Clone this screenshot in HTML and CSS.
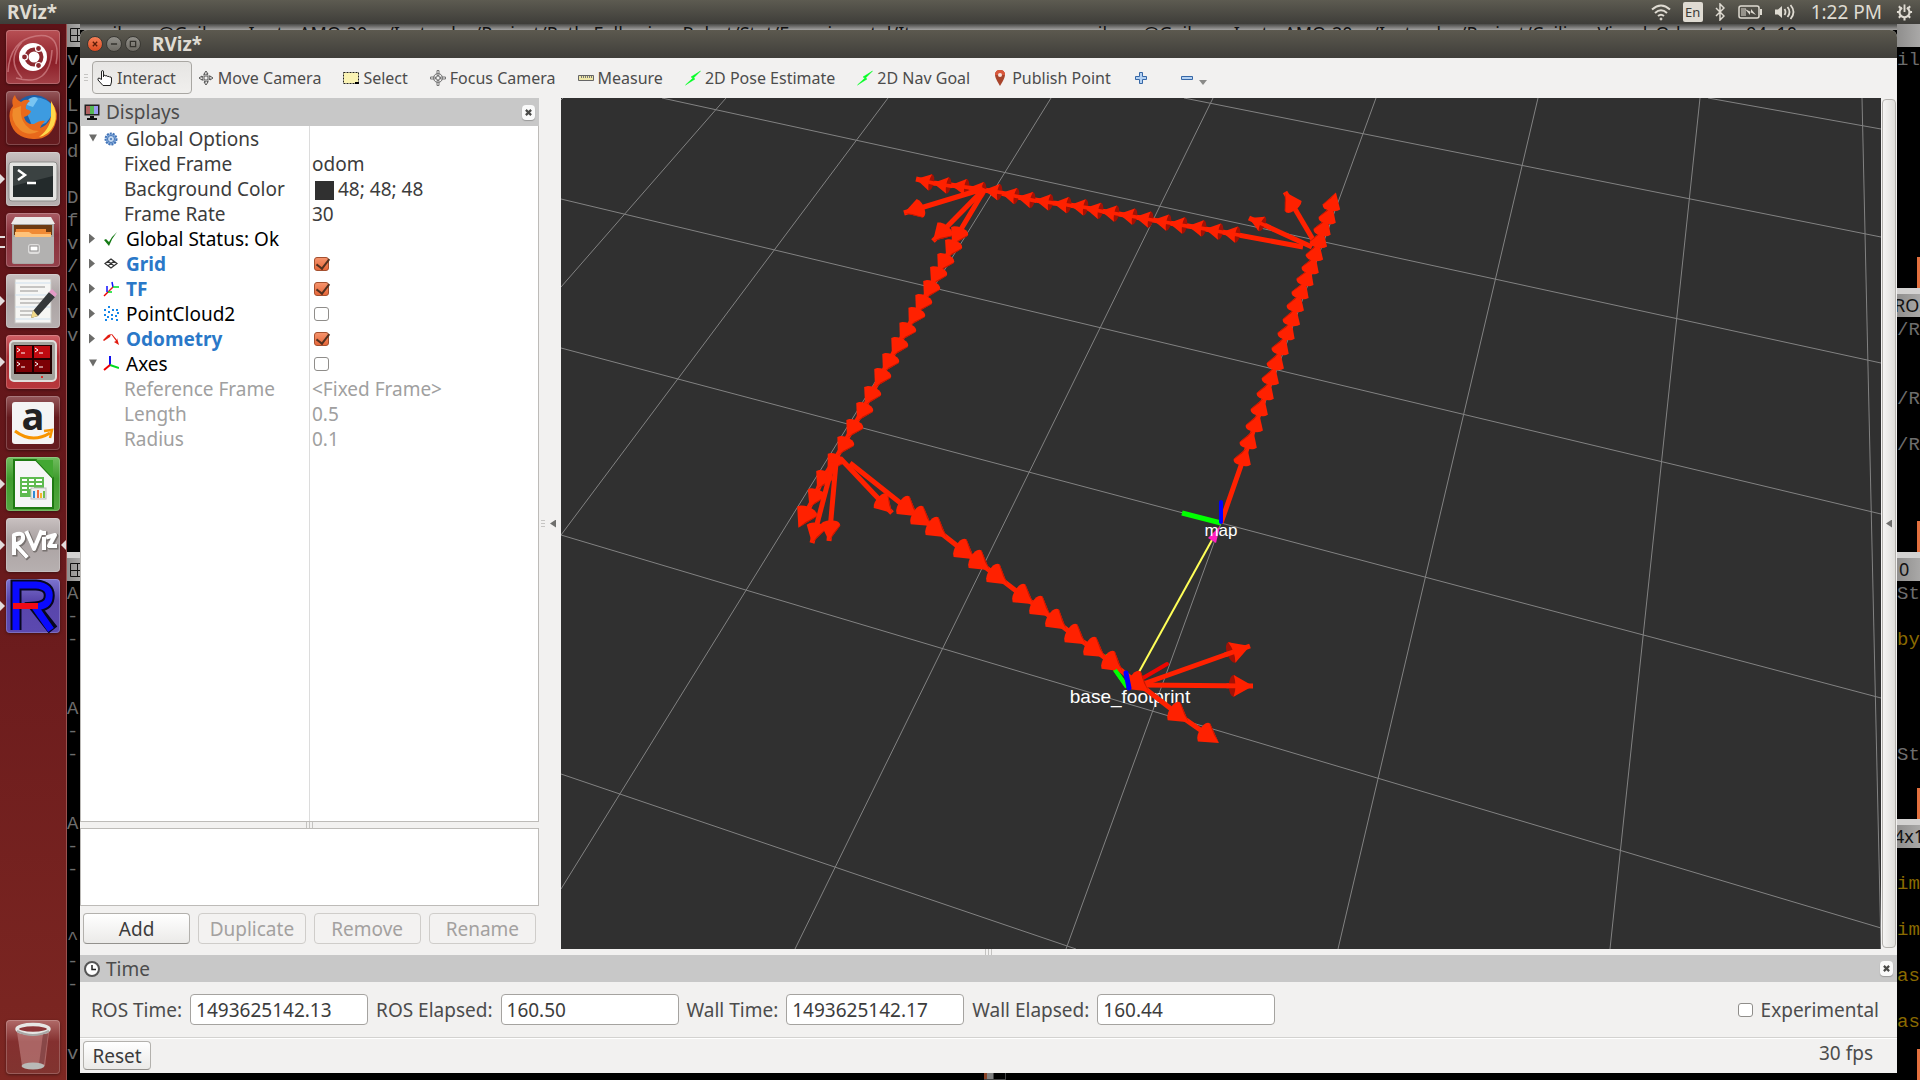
FILE: index.html
```html
<!DOCTYPE html>
<html lang="en">
<head>
<meta charset="utf-8">
<title>RViz*</title>
<link rel="stylesheet" href="styles.css">
</head>
<body>
<header class="panel">
  <span class="panel-title">RViz*</span>
  <div class="indicators">
    <svg width="20" height="18" viewBox="0 0 20 18" fill="none" stroke="#dfdbd2" stroke-width="2"><path d="M1 6.500Q10-1.500 19 6.500M4 10Q10 4.500 16 10M7 13Q10 10.500 13 13"/><circle cx="10" cy="16" r="1" fill="#dfdbd2" stroke-width="1"/></svg>
    <span class="lang">En</span>
    <svg width="10" height="18" viewBox="0 0 10 18" fill="none" stroke="#dfdbd2" stroke-width="1.500"><path d="M1 5l8 8-4 4V1l4 4-8 8"/></svg>
    <svg class="battery" width="24" height="14" viewBox="0 0 24 14"><rect x="1" y="1" width="20" height="12" rx="2" fill="none" stroke="#dfdbd2" stroke-width="1.500"/><path d="M22 4h2v6h-2z" fill="#dfdbd2"/><path d="M3 3h5v8H3z" fill="#96938b"/><path d="M7 4l6 3V4l5 6-6-3v3z" fill="#dfdbd2"/></svg>
    <svg class="volume" width="21" height="18" viewBox="0 0 21 18" fill="none" stroke="#dfdbd2" stroke-width="1.800"><path d="M1 6.500h3L8 3v12L4 11.500H1z" fill="#dfdbd2" stroke="none"/><path d="M10.500 6q2 3 0 6M13.500 4q4 5 0 10M16.500 2q6 7 0 14"/></svg>
    <span class="clock">1:22 PM</span>
    <svg width="17" height="18" viewBox="0 0 18 18" fill="none" stroke="#dfdbd2"><path d="M6.500 4.500a5.300 5.300 0 1 0 5 0" stroke-width="2.200"/><path d="M9 1v8" stroke-width="2"/><path d="M1 9h3M14 9h3M3 3l2 2M15 3l-2 2M3 15l2-2M15 15l-2-2M9 15v3" stroke-width="2.200"/></svg>
  </div>
</header>

<div class="desktop">
<nav class="launcher" aria-label="Launcher">
  <a href="#dash" class="tile dash" aria-label="Dash"><svg viewBox="0 0 54 54"><path d="M2 42Q4 10 30 6T50 34M10 48Q44 58 46 20M16 12Q0 30 16 48" fill="none" stroke="#d3888b" stroke-width="1.500" opacity=".7"/><circle cx="27" cy="27" r="14" fill="#fff"/><circle cx="28" cy="27" r="7.500" fill="none" stroke="#8c2a30" stroke-width="4"/><g fill="#8c2a30" stroke="#fff" stroke-width="1.200"><circle cx="18.500" cy="27" r="3"/><circle cx="32.500" cy="18.500" r="3"/><circle cx="32.500" cy="35.500" r="3"/></g></svg></a>
  <a href="#firefox" class="tile glass" aria-label="Firefox"><svg viewBox="0 0 54 54"><circle cx="28" cy="25" r="21" fill="#1c5fa8"/><path d="M17 13Q26 2 40 9T40 32L27 37Z" fill="#3d9be0"/><path d="M23 8q6-4 9 0l-5 8-6-2z" fill="#79c5f2"/><path d="M7 15Q5 8 9 4Q10 9 15 11Q20 7 24 10Q19 13 20 18L25 20Q24 24 18 26Q20 34 28 33Q34 29 39 30Q35 34 34 37Q48 32 46 12Q54 22 49 34Q43 49 27 48Q8 47 4 30Q2 20 7 15Z" fill="#e8691b"/><path d="M45 10Q53 22 48 34Q43 44 33 46Q46 36 45 22Z" fill="#ffd84a"/><path d="M7 18Q4 30 14 39Q23 46 33 40Q22 40 17 30Q14 24 15 15Z" fill="#f08c2c"/></svg></a>
  <a href="#terminal" class="tile silver running" aria-label="Terminal"><svg viewBox="0 0 54 54"><rect x="3" y="10" width="48" height="39" rx="3" fill="#e4e4e2" stroke="#8d8d8b"/><rect x="7" y="14" width="40" height="31" fill="#232a2b"/><path d="M7 14h40v10L7 34z" fill="#3b4242"/><path d="M12 18l7 5-7 5M21 31h9" fill="none" stroke="#fff" stroke-width="2.500"/></svg></a>
  <a href="#files" class="tile rose double" aria-label="Files"><svg viewBox="0 0 54 54"><path d="M9 4h36l4 7H5z" fill="#ecebea"/><path d="M6 11h42v38q0 2-2 2H8q-2 0-2-2z" fill="#a8a7a5"/><path d="M8 12h38v10H8z" fill="#6d3a12"/><path d="M10 16h30v3h5v5H9z" fill="#f08a35"/><path d="M9 19h14l3 2h19v4H9z" fill="#ffc37a"/><path d="M7 24h41v24q0 2-2 2H9q-2 0-2-2z" fill="#b2b1b0"/><rect x="22" y="31" width="12" height="10" rx="3" fill="#dedddc"/><rect x="24" y="33" width="8" height="5" fill="#fff" stroke="#8b8a89"/></svg></a>
  <a href="#editor" class="tile silver running" aria-label="Text Editor"><svg viewBox="0 0 54 54"><rect x="9" y="5" width="36" height="44" fill="#f6f6f4" stroke="#c5c3c0"/><path d="M9 9h36M9 21h36M9 33h36M9 45h36" stroke="#cfe0ee"/><path d="M14 13h25M14 17h18M14 25h25M14 29h25M14 37h14M14 41h12" stroke="#b7b5b3" stroke-width="1.500"/><path d="M27 37L43 18l6 5-17 19-7 2z" fill="#35383a"/><path d="M43 18l3-3 5 5-2 3z" fill="#e49ac6"/><path d="M27 36l5 6-7 2z" fill="#f1d98a"/></svg></a>
  <a href="#terminator" class="tile red running" aria-label="Terminator"><svg viewBox="0 0 54 54"><rect x="4" y="6" width="46" height="40" rx="4" fill="#a3a29c" stroke="#e0dfdb" stroke-width="2"/><rect x="8" y="10" width="38" height="29" fill="#200"/><path d="M10 11h16v12H10zM28 11h16v12H28z" fill="#c00a10"/><path d="M10 25h16v12H10zM28 25h16v12H28z" fill="#7c0005"/><path d="M11 13l3 2-3 2M15 18h4M29 13l3 2-3 2M33 18h4M11 27l3 2-3 2M15 32h4M29 27l3 2-3 2M33 32h4" fill="none" stroke="#fff"/><circle cx="36" cy="42" r="1" fill="#e00"/></svg></a>
  <a href="#amazon" class="tile glass" aria-label="Amazon"><svg viewBox="0 0 54 54"><rect x="6" y="6" width="42" height="42" rx="3" fill="#f4f4f4"/><text x="27" y="34" text-anchor="middle" class="amazon-a">a</text><path d="M9 35Q26 48 44 37" fill="none" stroke="#f79400" stroke-width="3"/><path d="M38 35l8-1-2 8" fill="none" stroke="#f79400" stroke-width="2.500"/></svg></a>
  <a href="#calc" class="tile green running" aria-label="LibreOffice Calc"><svg viewBox="0 0 54 54"><path d="M8 3h22l17 18v30H8z" fill="#f6f6f6" stroke="#1f7a12" stroke-width="2"/><path d="M30 3h17v18z" fill="#43a832"/><path d="M14 20h24v20H14z" fill="#5fbb50"/><path d="M16 22h5v2h-5zM23 22h5v2h-5zM30 22h6v2h-6zM16 26h5v2h-5zM23 26h5v2h-5zM30 26h6v2h-6zM16 30h5v2h-5zM23 30h5v2h-5zM16 34h5v2h-5z" fill="#fff"/><rect x="25" y="31" width="15" height="11" fill="#eee" stroke="#bbb"/><path d="M27 34h2v7h-2z" fill="#2f8bd6"/><path d="M31 33h2v8h-2z" fill="#f06a3c"/><path d="M34 36h2v5h-2z" fill="#f5b52b"/><path d="M37 34h2v7h-2z" fill="#6fbf4b"/></svg></a>
  <a href="#rviz" class="tile silver running focused" aria-label="RViz"><svg viewBox="0 0 54 54"><g fill="none" stroke-linecap="square" stroke-linejoin="round"><path d="M9 36V18Q19 14 18 22 16 27 10 27L21 39M22 16L29 32 36 15M39 22V31M39 16V16M43 20L50 18 44 29 50 29" stroke="#77716f" stroke-width="5"/><path d="M8 35V17Q18 13 17 21 15 26 9 26L20 38M21 15L28 31 35 14M38 21V30M38 15V15M42 19L49 17 43 28 49 28" stroke="#fff" stroke-width="4"/></g></svg></a>
  <a href="#rxplot" class="tile violet running" aria-label="R"><svg viewBox="0 0 54 54"><path d="M10 51V6H30Q45 7 43 19 42 27 29 28L47 51" fill="none" stroke="#070720" stroke-width="11"/><path d="M10 51V6H30Q45 7 43 19 42 27 29 28L45 51" fill="none" stroke="#0a0aff" stroke-width="7"/><path d="M7 24h25v6H7z" fill="#f20b16"/></svg></a>
  <a href="#trash" class="tile trash" aria-label="Trash"><svg viewBox="0 0 54 54"><path d="M11 12h32l-4 34H16z" fill="#d9a5a5" opacity=".45"/><path d="M37 14h5l-4 30h-5z" fill="#4a1013" opacity=".35"/><ellipse cx="27" cy="46" rx="11.500" ry="3.500" fill="#b9bbb8"/><ellipse cx="27" cy="9" rx="16" ry="4.500" fill="#8b3537" stroke="#e6e6e4" stroke-width="3.500"/><path d="M11 11Q27 19 43 11" fill="none" stroke="#a8a8a6" stroke-width="2"/></svg></a>
</nav>

<main class="workspace">
  <div class="term-title"><span>silvam@Gailvam-Inote-AMO-20: ~/Instrudes/Project/Path_Following_Robot/Stat/Experimental/Its</span><span>silvam@Gailvam-Inote-AMO-20: ~/Instrudes/Project/Ceiling_Visual_Odometry 94x10</span></div>

  <div class="strip strip-left">
    <div class="bar bar-first"><svg width="14" height="14" viewBox="0 0 14 14" fill="none" stroke="#111"><path d="M.5.5h13v13H.5zM7.500 0v14M0 7.500h14"/></svg></div>
<pre class="upper">v
/
L
D
d

D
f
v
/
^
v
v</pre>
    <div class="bar"><svg width="14" height="14" viewBox="0 0 14 14" fill="none" stroke="#111"><path d="M.5.5h13v13H.5zM7.500 0v14M0 7.500h14"/></svg></div>
<pre>A
-
-


A
-
-


A
-
-


^
-
-


v</pre>
  </div>

  <section class="window" aria-label="RViz">
    <div class="titlebar">
      <button class="wm close" aria-label="Close"><svg viewBox="0 0 16 16"><path d="M5.500 5.500l5 5m0-5l-5 5" stroke="#5a1c08" stroke-width="1.500"/></svg></button>
      <button class="wm" aria-label="Minimize"><svg viewBox="0 0 16 16"><path d="M4.500 8h7" stroke="#35332e" stroke-width="1.500"/></svg></button>
      <button class="wm" aria-label="Maximize"><svg viewBox="0 0 16 16"><path d="M5 5h6v6H5z" fill="none" stroke="#35332e" stroke-width="1.500"/></svg></button>
      <h1>RViz*</h1>
    </div>

    <div class="toolbar">
      <span class="grip"></span>
      <button class="tool active"><svg viewBox="0 0 16 16"><path d="M4.500 9.500V2q0-1.500 1-1.500t1 1.500v5V5.500q2-1 2 .5 2-1 2 .5 2-.500 2 .5 2-.500 2 1V12l-1 3.500H6L1 10q-.500-2 1-2z" fill="#fff" stroke="#222"/></svg>Interact</button>
      <button class="tool"><svg viewBox="0 0 16 16" fill="none" stroke="#555"><path d="M8 1L6 4h1v3H4V6L1 8l3 2V9h3v3H6l2 3 2-3H9V9h3v1l3-2-3-2v1H9V4h1z"/><circle cx="8" cy="8" r="4" stroke-dasharray="2 1"/></svg>Move Camera</button>
      <button class="tool"><svg viewBox="0 0 16 16"><path d="M.5 2.500h15v11H.5z" fill="#faf3b4" stroke="#222" stroke-dasharray="2 1"/><path d="M12 12h4v2h-4z"/></svg>Select</button>
      <button class="tool"><svg viewBox="0 0 16 16" fill="none" stroke="#777"><circle cx="8" cy="8" r="4.500"/><circle cx="8" cy="8" r="2"/><path d="M7 .5h2v5H7zM7 10.500h2v5H7zM.5 7h5v2h-5zM10.500 7h5v2h-5z"/></svg>Focus Camera</button>
      <button class="tool"><svg viewBox="0 0 16 16"><path d="M.5 5.500h15v5H.5z" fill="#efe7a8" stroke="#666"/><path d="M3.500 6v2M5.500 6v2M7.500 6v2M9.500 6v2M11.500 6v2M13.500 6v2" stroke="#777"/></svg>Measure</button>
      <button class="tool"><svg viewBox="0 0 16 16"><path d="M15.500 1L6 7l2 1-7.500 7L10 9 8.500 8z" fill="#0f2" stroke="#0f2" stroke-width=".5"/></svg>2D Pose Estimate</button>
      <button class="tool"><svg viewBox="0 0 16 16"><path d="M15.500 1L6 7l2 1-7.500 7L10 9 8.500 8z" fill="#0f2" stroke="#0f2" stroke-width=".5"/></svg>2D Nav Goal</button>
      <button class="tool"><svg viewBox="0 0 16 16"><path d="M8 0Q13 0 13 5Q13 8 8 16Q3 8 3 5Q3 0 8 0z" fill="#a8452c"/><path d="M8 0Q13 0 13 5H3Q3 0 8 0z" fill="#d9583c"/><circle cx="8" cy="5" r="2" fill="#f6e4de"/></svg>Publish Point</button>
      <button class="tool small" aria-label="Add tool"><svg viewBox="0 0 16 16"><path d="M6.500 2.500h3v4h4v3h-4v4h-3v-4h-4v-3h4z" fill="#b4d1f2" stroke="#3667a6"/></svg></button>
      <button class="tool small" aria-label="Remove tool"><svg viewBox="0 0 16 16"><path d="M2.500 6.500h11v3h-11z" fill="#b4d1f2" stroke="#3667a6"/></svg><svg class="drop" viewBox="0 0 8 8"><path d="M0 2h8L4 7z" fill="#8a8a88"/></svg></button>
    </div>

    <div class="center">
      <aside class="displays">
        <div class="dock-head"><svg viewBox="0 0 16 16"><path d="M.5.5h15v11H.5z" fill="#222"/><path d="M2 2h4v8H2z" fill="#b06060"/><path d="M6 2h4v8H6z" fill="#56b856"/><path d="M10 2h4v8h-4z" fill="#9a9af0"/><path d="M6 12h4v2h3v2H3v-2h3z" fill="#111"/></svg><h2>Displays</h2><button class="dock-close" aria-label="Close Displays"><svg viewBox="0 0 8 8"><path d="M1 1l6 6M7 1L1 7" stroke="#4a4a48" stroke-width="2.500"/></svg></button></div>
        <div class="tree">
          <table>
            <colgroup><col class="col-name"><col></colgroup>
            <tr><td class="name"><i class="open"></i><svg viewBox="0 0 16 16"><circle cx="8" cy="8" r="5.500" fill="#8db2e0" stroke="#4374b7" stroke-width="2" stroke-dasharray="2 1"/><circle cx="8" cy="8" r="3.500" fill="#c3d8f0" stroke="#4374b7"/><circle cx="8" cy="8" r="1" fill="#4374b7"/></svg>Global Options</td><td></td></tr>
            <tr><td class="name sub">Fixed Frame</td><td>odom</td></tr>
            <tr><td class="name sub">Background Color</td><td><span class="swatch"></span>48; 48; 48</td></tr>
            <tr><td class="name sub">Frame Rate</td><td>30</td></tr>
            <tr class="black"><td class="name"><i></i><svg viewBox="0 0 16 16"><path d="M1 9l2-1 3 3Q9 5 14 1 9 7 6 15z" fill="#157a15"/></svg>Global Status: Ok</td><td></td></tr>
            <tr class="on"><td class="name"><i></i><svg viewBox="0 0 16 16" fill="none" stroke="#333" stroke-width="1.200"><path d="M8 3l6 4.500L8 12 2 7.500zM5 5.200L11 9.800M11 5.200L5 9.800"/></svg><label for="c1">Grid</label></td><td><input type="checkbox" id="c1" checked></td></tr>
            <tr class="on"><td class="name"><i></i><svg viewBox="0 0 16 16" fill="none" stroke-width="1.500"><path d="M1 15l4-4" stroke="#e00"/><path d="M5 11l5-5" stroke="#e82020"/><path d="M4 5v6M9 1l1 5" stroke="#11f"/><path d="M10 6h6M5 11h4" stroke="#0d2"/></svg><label for="c2">TF</label></td><td><input type="checkbox" id="c2" checked></td></tr>
            <tr class="black"><td class="name"><i></i><svg viewBox="0 0 16 16" fill="#1687e8"><path d="M5 0h2v2H5zM1 3h2v2H1zM9 3h2v2H9zM13 3h2v2h-2zM5 5h2v2H5zM1 8h2v2H1zM8 8h2v2H8zM12 9h2v2h-2zM4 10h2v2H4zM8 12h2v2H8zM13 13h2v2h-2zM2 13h2v2H2zM14 6h2v2h-2z"/></svg><label for="c3">PointCloud2</label></td><td><input type="checkbox" id="c3"></td></tr>
            <tr class="on"><td class="name"><i></i><svg viewBox="0 0 16 16"><path d="M0 9l5-5 3-1-1 3-6 4zM9 3l5 6V7l2 7-5-3 2-1-5-7z" fill="#e21b10"/></svg><label for="c4">Odometry</label></td><td><input type="checkbox" id="c4" checked></td></tr>
            <tr class="black"><td class="name"><i class="open"></i><svg viewBox="0 0 16 16" fill="none" stroke-width="2"><path d="M7 9V0" stroke="#11e"/><path d="M7 9l9 3" stroke="#0d2"/><path d="M7 9l-6 5" stroke="#e00"/></svg><label for="c5">Axes</label></td><td><input type="checkbox" id="c5"></td></tr>
            <tr class="off"><td class="name sub">Reference Frame</td><td>&lt;Fixed Frame&gt;</td></tr>
            <tr class="off"><td class="name sub">Length</td><td>0.5</td></tr>
            <tr class="off"><td class="name sub">Radius</td><td>0.1</td></tr>
          </table>
        </div>
        <span class="splitter"></span>
        <div class="description"></div>
        <div class="actions">
          <button>Add</button><button disabled>Duplicate</button><button disabled>Remove</button><button disabled>Rename</button>
        </div>
      </aside>

      <div class="handle"><span class="grip"></span><i class="tri"></i></div>

      <svg class="scene" viewBox="561 98 1320 851" preserveAspectRatio="xMidYMid slice" role="img" aria-label="3D view">
        <defs>
          <g id="cone"><path d="M10 0L-5-9Q-8-9-9-5-10 2-7 7L-5 9z" fill="#ff2100"/><path d="M-6-9L-5-9 10 0 3-3z" fill="#c41800"/></g>
          <g id="cone-back"><ellipse cx="-6" cy="0" rx="4" ry="9" fill="#a11206"/><path d="M-4-2h-8v4h8z" fill="#ff2100"/><path d="M10 0L-6-9Q-3 0-6 9z" fill="#ff2100"/></g>
          <marker id="up" markerUnits="userSpaceOnUse" markerWidth="24" markerHeight="24" viewBox="-12 -12 24 24" orient="auto"><use href="#cone"/></marker>
          <marker id="down" markerUnits="userSpaceOnUse" markerWidth="25" markerHeight="25" viewBox="-12 -12 24 24" orient="auto"><use href="#cone"/></marker>
          <marker id="home" markerUnits="userSpaceOnUse" markerWidth="29" markerHeight="29" viewBox="-12 -12 24 24" orient="auto"><use href="#cone"/></marker>
          <marker id="west" markerUnits="userSpaceOnUse" markerWidth="22" markerHeight="22" refX="-10" viewBox="-12 -12 24 24" orient="auto"><use href="#cone-back" transform="scale(-1 1)"/></marker>
          <marker id="tip" markerUnits="userSpaceOnUse" markerWidth="26" markerHeight="26" refX="10" viewBox="-12 -12 24 24" orient="auto"><use href="#cone"/></marker>
          <marker id="tip-back" markerUnits="userSpaceOnUse" markerWidth="21" markerHeight="21" refX="10" viewBox="-12 -12 24 24" orient="auto"><use href="#cone-back"/></marker>
          <marker id="tip-big" markerUnits="userSpaceOnUse" markerWidth="29" markerHeight="29" refX="10" viewBox="-12 -12 24 24" orient="auto"><use href="#cone-back"/></marker>
        </defs>
        <rect x="561" y="98" width="1320" height="851" fill="#303030"/>
        <path class="grid" d="M561 100L563 98M726 98L561 287M888 98L561 535M1051 98L561 889M1213 98L795 949M1376 98L1066 949M1538 98L1338 949M1700 98L1610 949M1862 98L1881 949M1708 98L1881 129M1184 98L1881 237M662 98L1881 363M561 199L1881 514M561 348L1881 698M561 535L1881 928M561 774L1076 949"/>
        <g class="arrows">
          <polyline marker-start="url(#west)" marker-mid="url(#west)" points="916,179 933,183 951,185 968,188 984,190 1001,193 1017,197 1035,200 1053,203 1070,205 1085,208 1101,211 1119,214 1135,217 1153,220 1169,223 1188,226 1205,229 1222,232 1303,247"/>
          <path marker-end="url(#tip)" d="M1315 243L1285 192"/>
          <path marker-end="url(#tip-back)" d="M1312 247L1249 218"/>
          <polyline marker-mid="url(#up)" marker-end="url(#up)" points="1221,523 1244,457 1250,440 1256,423 1261,407 1267,391 1272,376 1277,361 1282,346 1288,331 1293,317 1297,303 1302,290 1307,277 1312,265 1316,252 1320,239 1324,227 1329,215 1333,202"/>
          <path marker-end="url(#tip)" d="M983 189L904 213"/>
          <path marker-end="url(#tip)" d="M983 190L933 241"/>
          <polyline marker-mid="url(#down)" marker-end="url(#home)" points="985,189 957,236 951,249 943,263 936,276 929,290 921,304 914,317 905,332 897,347 888,363 880,378 870,396 862,412 852,429 843,446 833,463 822,480 814,498 804,517"/>
          <path marker-end="url(#tip)" d="M833 463L812 543"/>
          <path marker-end="url(#tip)" d="M836 463L829 541"/>
          <path marker-end="url(#tip)" d="M840 458L892 513"/>
        </g>
        <path d="M1105 655L1127 687" stroke="#0f0" stroke-width="4"/>
        <g class="arrows">
          <polyline marker-mid="url(#home)" points="850,463 908,509 922,519 937,530 965,552 980,563 998,577 1024,597 1041,609 1057,622 1076,637 1095,650 1113,664 1137,683"/>
        </g>
        <path d="M1115 670L1127 687" stroke="#0f0" stroke-width="4"/>
        <path d="M1143 678L1167 664" stroke="#ee0600" stroke-width="4" stroke-linecap="round"/>
        <path d="M1139 672L1212 540" stroke="#ffff58" stroke-width="2"/>
        <path d="M1220 526L1208 538 1216 543z" fill="#ff1fc0"/>
        <path d="M1182 513L1221 523" stroke="#0f0" stroke-width="5"/>
        <path d="M1221 502V522" stroke="#00f" stroke-width="4" stroke-linecap="round"/>
        <text x="1221" y="536" class="frame-far">map</text>
        <text x="1130" y="703" class="frame-near">base_footprint</text>
        <g class="arrows">
          <path marker-end="url(#tip-big)" d="M1143 684L1250 646"/>
          <path marker-end="url(#tip-big)" d="M1143 685L1253 686"/>
          <polyline marker-start="url(#home)" marker-mid="url(#home)" marker-end="url(#home)" points="1139,684 1179,715 1209,736"/>
        </g>
        <path d="M1126 673L1129 688" stroke="#00f" stroke-width="5" stroke-linecap="round"/>
      </svg>

      <button class="side-handle" aria-label="Show views"><i class="tri"></i></button>
    </div>

    <span class="splitter"></span>
    <section class="time">
      <div class="dock-head"><svg viewBox="0 0 16 16"><circle cx="8" cy="8" r="7" fill="#fff" stroke="#555" stroke-width="2"/><path d="M8 4v4.500h4" fill="none" stroke="#222" stroke-width="1.500"/></svg><h2>Time</h2><button class="dock-close" aria-label="Close Time"><svg viewBox="0 0 8 8"><path d="M1 1l6 6M7 1L1 7" stroke="#4a4a48" stroke-width="2.500"/></svg></button></div>
      <form class="clocks">
        <label for="rt">ROS Time:</label><input id="rt" type="text" value="1493625142.13" readonly>
        <label for="re">ROS Elapsed:</label><input id="re" type="text" value="160.50" readonly>
        <label for="wt">Wall Time:</label><input id="wt" type="text" value="1493625142.17" readonly>
        <label for="we">Wall Elapsed:</label><input id="we" type="text" value="160.44" readonly>
        <span class="experimental"><input id="ex" type="checkbox"><label for="ex">Experimental</label></span>
      </form>
    </section>
    <footer class="status"><button>Reset</button><span>30 fps</span></footer>
  </section>

  <div class="strip strip-right">
    <div class="bar bar-first"></div>
<pre class="r1">il</pre>
    <div class="bar cut">ROS</div>
<pre class="r2">/R


/R

/R</pre>
    <div class="bar">0</div>
<pre class="r3">St

<b>by</b>




St</pre>
    <div class="bar cut">4x1</div>
<pre class="r4">

<b>im</b>

<b>im</b>

<b>as</b>

<b>as</b></pre>
  </div>
  <div class="term-foot"><span></span></div>
</main>
</div>
</body>
</html>
```
FILE: styles.css
```css
* { box-sizing: border-box; }
body {
  margin: 0;
  height: 100vh;
  display: flex;
  flex-direction: column;
  background: #000;
  color: #4c4c4c;
  font: 19px/24px "Noto Sans", sans-serif;
  overflow: hidden;
}
button, input { font: inherit; color: inherit; margin: 0; }
h1, h2 { margin: 0; font-size: 19px; }
svg { display: block; flex: none; }

/* top panel */
.panel {
  flex: none;
  height: 24px;
  padding: 0 7px;
  display: flex;
  align-items: center;
  justify-content: space-between;
  background: linear-gradient(#5d5b51, #3e3d39);
  color: #dfdbd2;
}
.panel-title { font-weight: 700; }
.indicators { display: flex; align-items: center; gap: 12px; }
.lang {
  width: 20px;
  height: 20px;
  border-radius: 2px;
  background: #dfdbd2;
  color: #3c3b37;
  font-size: 13px;
  line-height: 20px;
  text-align: center;
}
.battery { margin-left: 1px; }
.clock { margin: 0 2px 0 4px; }

.desktop { flex: 1; min-height: 0; display: flex; }

/* launcher */
.launcher {
  flex: none;
  width: 67px;
  padding: 6px 6px;
  display: flex;
  flex-direction: column;
  gap: 7px;
  border-right: 1px solid #99514f;
  background: linear-gradient(#5d1217, #66181b 45%, #7d2722);
}
.tile {
  position: relative;
  flex: none;
  width: 54px;
  height: 54px;
  border-radius: 4px;
  box-shadow: inset 0 0 0 1px rgba(255,255,255,.2), 0 1px 3px rgba(0,0,0,.4);
}
.dash { background: linear-gradient(#b85055, #8c1f28 60%, #a34147); }
.glass { background: linear-gradient(#95585b, #64191d 40%, #641b1f); }
.silver { background: linear-gradient(#c9c1c1, #aaa2a2 40%, #b7b0b0); }
.rose { background: linear-gradient(#a85c64, #8a2f3a 40%, #93404a); }
.red { background: linear-gradient(#d06066, #a82b31 40%, #b8383c); }
.green { background: linear-gradient(#72bd60, #3f9c2d 40%, #53a740); }
.violet { background: linear-gradient(#7c74cf, #5845ab 40%, #5c49b0); }
.trash { margin-top: auto; background: linear-gradient(#b06a68, #84302f 40%, #813430); }
.running::before, .focused::after, .double::before {
  content: "";
  position: absolute;
  top: 22px;
  left: -6px;
  border: 5px solid transparent;
  border-left-color: #e3dcdc;
  border-right-width: 0;
}
.double::before {
  width: 5px;
  height: 8px;
  top: 23px;
  border: 0 solid #e3dcdc;
  border-width: 2px 0;
}
.focused::after {
  left: auto;
  right: -6px;
  border-width: 5px 5px 5px 0;
  border-color: transparent #e3dcdc;
}
.amazon-a { font: 700 38px "Open Sans", sans-serif; fill: #222; }

/* workspace: terminal edges around the window */
.workspace {
  flex: 1;
  min-width: 0;
  display: grid;
  grid-template: 6px minmax(0, 1fr) 7px / 13px minmax(0, 1fr) 23px;
}
.term-title {
  grid-area: 1 / 2;
  display: flex;
  justify-content: space-between;
  overflow: hidden;
  padding: 0 100px 0 24px;
  background: linear-gradient(#4a4a48, #a3a2a1);
  color: #111;
  font-size: 18px;
  white-space: nowrap;
  line-height: 18px;
}
.strip { grid-row: 1 / 4; overflow: hidden; color: #6d6d6d; }
.strip-left { grid-column: 1; }
.strip-right { grid-column: 3; }
pre { margin: 0; font: 19px/23px "Liberation Mono", monospace; padding-top: 2px; }
pre b { font-weight: 400; color: #8a6a00; }
.bar {
  height: 29px;
  padding: 7px 1px 0 3px;
  border-top: 6px solid #d3d2d1;
  background: linear-gradient(90deg, #8f8e8d, #a9a8a7);
  color: #111;
  font-size: 18px;
  line-height: 16px;
  display: flex;
}
.bar svg { margin-top: -2px; }
.strip-right .bar { padding: 3px 0 0 2px; }
.strip-right .cut { text-indent: -5px; }
.bar-first, .strip-right .bar-first { height: 23px; border-top: 0; padding-top: 6px; }
.upper { height: 505px; }
.r1 { height: 241px; }
.r2 { height: 235px; }
.r3 { height: 238px; }
.r4 { height: 232px; }
.r1, .r2, .r3, .r4 {
  background: linear-gradient(#e2703f, #e2703f) right bottom / 3px 31px no-repeat;
}
.term-foot { grid-area: 3 / 2; padding-left: 904px; }
.term-foot span {
  display: block;
  width: 22px;
  height: 7px;
  border: solid #444;
  border-width: 0 1px 1px 0;
  background: linear-gradient(90deg, #8a4327 3px, #808080 3px 9px, #444 9px 10px, #000 10px);
}

/* window */
.window {
  grid-area: 2 / 2;
  min-height: 0;
  display: flex;
  flex-direction: column;
  border-radius: 7px 7px 0 0;
  overflow: hidden;
  background: #f2f1f0;
}
.titlebar {
  flex: none;
  height: 28px;
  padding-left: 7px;
  display: flex;
  align-items: center;
  gap: 3px;
  background: linear-gradient(#5c594f, #3f3e3a);
  color: #dfdbd2;
}
.titlebar h1 { margin-left: 8px; }
.wm {
  width: 16px;
  height: 16px;
  padding: 0;
  border: 1px solid #3a3934;
  border-radius: 50%;
  background: linear-gradient(#92908a, #6d6a63);
}
.wm.close { background: linear-gradient(#f58058, #dc4a20); }

.toolbar {
  flex: none;
  height: 40px;
  padding: 3px 4px 4px;
  display: flex;
  align-items: center;
  font-size: 16px;
}
.grip {
  width: 4px;
  height: 8px;
  background: repeating-linear-gradient(#c6c5c3 0 1px, transparent 1px 3px);
}
.toolbar .grip { margin-right: 4px; }
.tool {
  height: 33px;
  padding: 0 16px 0 6px;
  display: flex;
  align-items: center;
  gap: 4px;
  border: 0;
  background: none;
}
.tool svg { width: 16px; height: 16px; }
.tool.active {
  padding: 0 15px 0 4px;
  border: 1px solid #a9a7a3;
  border-radius: 4px;
  background: linear-gradient(#e6e5e3, #f0efed);
}
.tool.small { padding-right: 24px; }
.tool .drop { width: 8px; height: 8px; margin-top: 8px; }

.center {
  flex: 1;
  min-height: 0;
  display: grid;
  grid-template-columns: 459px 22px minmax(0, 1fr) 16px;
  grid-template-rows: minmax(0, 1fr);
}
.displays { display: flex; flex-direction: column; min-height: 0; }
.dock-head {
  flex: none;
  height: 28px;
  padding: 0 4px;
  display: flex;
  align-items: center;
  gap: 6px;
  background: #c8c8c8;
}
.dock-head > svg { width: 16px; height: 16px; }
.dock-head h2 { font-weight: 400; }
.dock-close {
  width: 13px;
  height: 15px;
  margin-left: auto;
  padding: 0;
  display: flex;
  align-items: center;
  justify-content: center;
  border: 0;
  border-radius: 4px;
  background: #fafafa;
  box-shadow: 0 1px 1px #999;
}
.dock-close svg { width: 7px; height: 7px; }
.tree {
  flex: 1;
  min-height: 0;
  border: 1px solid #bdbbb8;
  border-top: 0;
  background: linear-gradient(90deg, transparent 228px, #dcdcdc 228px 229px, transparent 229px) #fff;
}
.tree table { width: 100%; border-collapse: collapse; table-layout: fixed; color: #3c3c3c; }
.col-name { width: 229px; }
.tree td { height: 25px; padding: 0 0 0 2px; white-space: nowrap; }
.tree td.name { display: flex; align-items: center; gap: 6px; padding-left: 8px; }
.tree td.sub { padding-left: 43px; }
.name svg { width: 16px; height: 16px; margin-right: 1px; }
.name i {
  width: 8px;
  height: 10px;
  background: #6c6c6a;
  clip-path: polygon(0 0, 6px 5px, 0 10px);
}
.name i.open { clip-path: polygon(0 1px, 8px 1px, 4px 8px); }
.tree tr.black { color: #000; }
.tree tr.on { color: #2a78c8; font-weight: 700; }
.tree tr.off { color: #a09fa0; }
.swatch {
  display: inline-block;
  width: 19px;
  height: 19px;
  margin: 0 4px 0 3px;
  vertical-align: -4px;
  background: #303030;
}
input[type="checkbox"] {
  appearance: none;
  position: relative;
  display: block;
  width: 15px;
  height: 14px;
  border: 1px solid #8f8d8a;
  border-radius: 3px;
  background: #fff;
}
td input[type="checkbox"] { margin-left: 2px; }
input[type="checkbox"]:checked { border-color: #a4502f; background: linear-gradient(#f5936c, #e8683a); }
input[type="checkbox"]:checked::after {
  content: "";
  position: absolute;
  left: 4px;
  top: -2px;
  width: 6px;
  height: 11px;
  border: solid #53301f;
  border-width: 0 2px 2px 0;
  transform: rotate(38deg);
}
.splitter {
  flex: none;
  align-self: center;
  width: 7px;
  height: 6px;
  background: repeating-linear-gradient(90deg, #c4c3c1 0 1px, transparent 1px 3px);
}
.description { flex: none; height: 78px; border: 1px solid #bdbbb8; background: #fff; }
.actions {
  flex: none;
  padding: 7px 3px 5px;
  display: grid;
  grid-template-columns: repeat(4, 1fr);
  gap: 8px;
}
.actions button, .status button {
  height: 31px;
  padding: 0;
  border: 1px solid #b3b1ad;
  border-bottom-color: #93918d;
  border-radius: 4px;
  background: linear-gradient(#fff, #ebeae8);
  color: #3c3c3c;
}
.actions button:disabled { border-color: #cfcdca; background: #f3f2f1; color: #a3a1a0; }

.handle { display: flex; align-items: center; gap: 5px; padding-left: 2px; }
.tri {
  width: 6px;
  height: 8px;
  background: #6f6f6d;
  clip-path: polygon(6px 0, 6px 8px, 0 4px);
}
.handle .grip { flex: none; }
.scene { width: 100%; height: 100%; background: #303030; }
.grid { fill: none; stroke: #828282; stroke-width: 1; }
.arrows { fill: none; stroke: #ff2100; stroke-width: 5; }
.frame-far, .frame-near { font-family: "Liberation Sans", sans-serif; fill: #fff; text-anchor: middle; }
.frame-far { font-size: 17px; }
.frame-near { font-size: 19px; }
.side-handle {
  margin: 1px;
  padding: 0;
  display: flex;
  align-items: center;
  justify-content: center;
  border: 1px solid #b3b1ad;
  border-radius: 4px;
  background: linear-gradient(90deg, #f6f5f4, #dfdedb);
}

.time { flex: none; border-bottom: 1px solid #d3d2d0; }
.time .dock-head { height: 27px; }
.clocks { height: 55px; padding: 0 18px 0 11px; display: flex; align-items: center; gap: 8px; }
.clocks input[type="text"] {
  width: 178px;
  height: 31px;
  padding: 0 5px;
  border: 1px solid #a5a3a0;
  border-radius: 4px;
  background: #fff;
  color: #3c3c3c;
}
.experimental { margin-left: auto; display: flex; align-items: center; gap: 8px; }
.status {
  flex: none;
  height: 35px;
  padding: 0 24px 0 3px;
  display: flex;
  align-items: center;
  justify-content: space-between;
  background: linear-gradient(#fff 1px, transparent 1px);
}
.status button { width: 68px; height: 29px; }
.status span { padding-bottom: 6px; }
```
